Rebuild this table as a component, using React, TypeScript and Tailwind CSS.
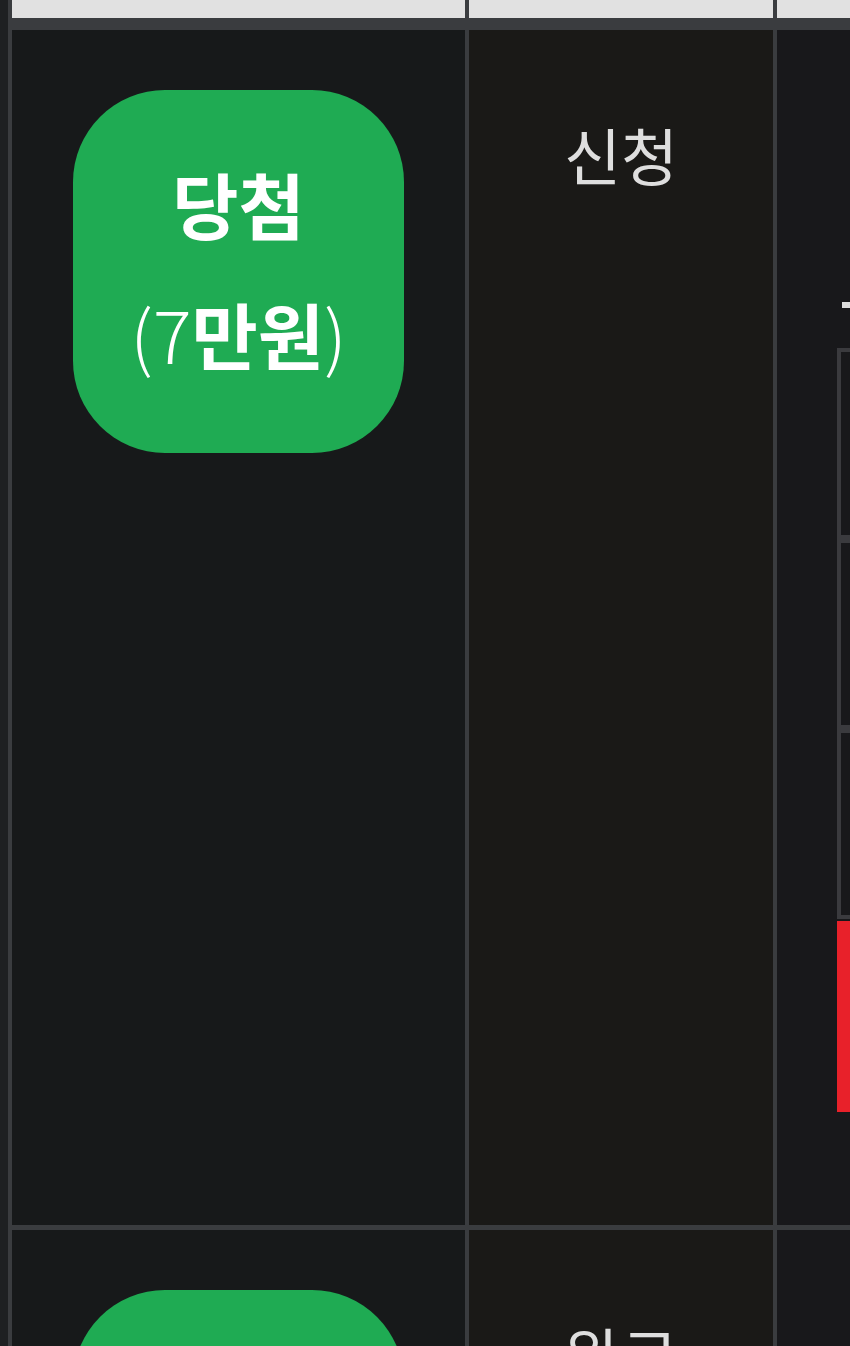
import React from "react";

const font = { fontFamily: '"Noto Sans CJK KR", "Noto Sans", sans-serif' };

// One prize badge in the first column
const Badge: React.FC<{ amount: string }> = ({ amount }) => (
  <div className="flex h-[363px] w-[331px] flex-col items-center justify-center rounded-[92px] bg-[#1fab53] pb-[8px] text-white">
    <div className="text-[72px] font-bold leading-[130px]">당첨</div>
    <div className="text-[72px] font-bold leading-[130px]">
      <span className="font-light">(</span>
      <span className="font-light">{amount}</span>
      만원
      <span className="font-light">)</span>
    </div>
  </div>
);

const Row: React.FC<{ status: string; amount: string; right?: React.ReactNode }> = ({
  status,
  amount,
  right,
}) => (
  <div className="grid h-[1195px] grid-cols-[453px_304px_1fr] gap-x-[4px]">
    <div className="flex justify-center bg-[#17191a] pt-[60px]">
      <Badge amount={amount} />
    </div>
    <div className="flex justify-center bg-[#1a1917] pt-[78px]">
      <span className="text-[62px] leading-[92px] text-[#dedede]">{status}</span>
    </div>
    <div className="overflow-hidden bg-[#18181b]">{right}</div>
  </div>
);

// Nested breakdown that is cut off by the right edge
const Breakdown = () => (
  <div className="pl-[60px] pt-[272px]">
    <div className="ml-[5px] h-[6px] w-[20px] bg-[#dcdcdc]" />
    <div className="mt-[40px] w-[40px] border-[4px] border-r-0 border-[#3a3a3e] bg-[#3a3a3e]">
      <div className="flex flex-col gap-[8px]">
        <div className="h-[183px] bg-[#18181b]" />
        <div className="h-[182px] bg-[#18181b]" />
        <div className="h-[182px] bg-[#18181b]" />
      </div>
    </div>
    <div className="mt-[2px] h-[191px] w-[40px] bg-[#e8212a]" />
  </div>
);

export default function App() {
  return (
    <div style={font} className="h-[1346px] w-[850px] overflow-hidden bg-[#1e2022] pl-[8px]">
      <div className="flex flex-col gap-y-[5px] border-l-[4px] border-[#3a3c3f] bg-[#3a3c3f]">
        <div className="grid h-[18px] grid-cols-[453px_304px_1fr] gap-x-[4px]">
          <div className="bg-[#e1e1e1]" />
          <div className="bg-[#e1e1e1]" />
          <div className="bg-[#e1e1e1]" />
        </div>
        <div className="mt-[7px]">
          <Row status="신청" amount="7" right={<Breakdown />} />
        </div>
        <Row status="완료" amount="5" />
      </div>
    </div>
  );
}
